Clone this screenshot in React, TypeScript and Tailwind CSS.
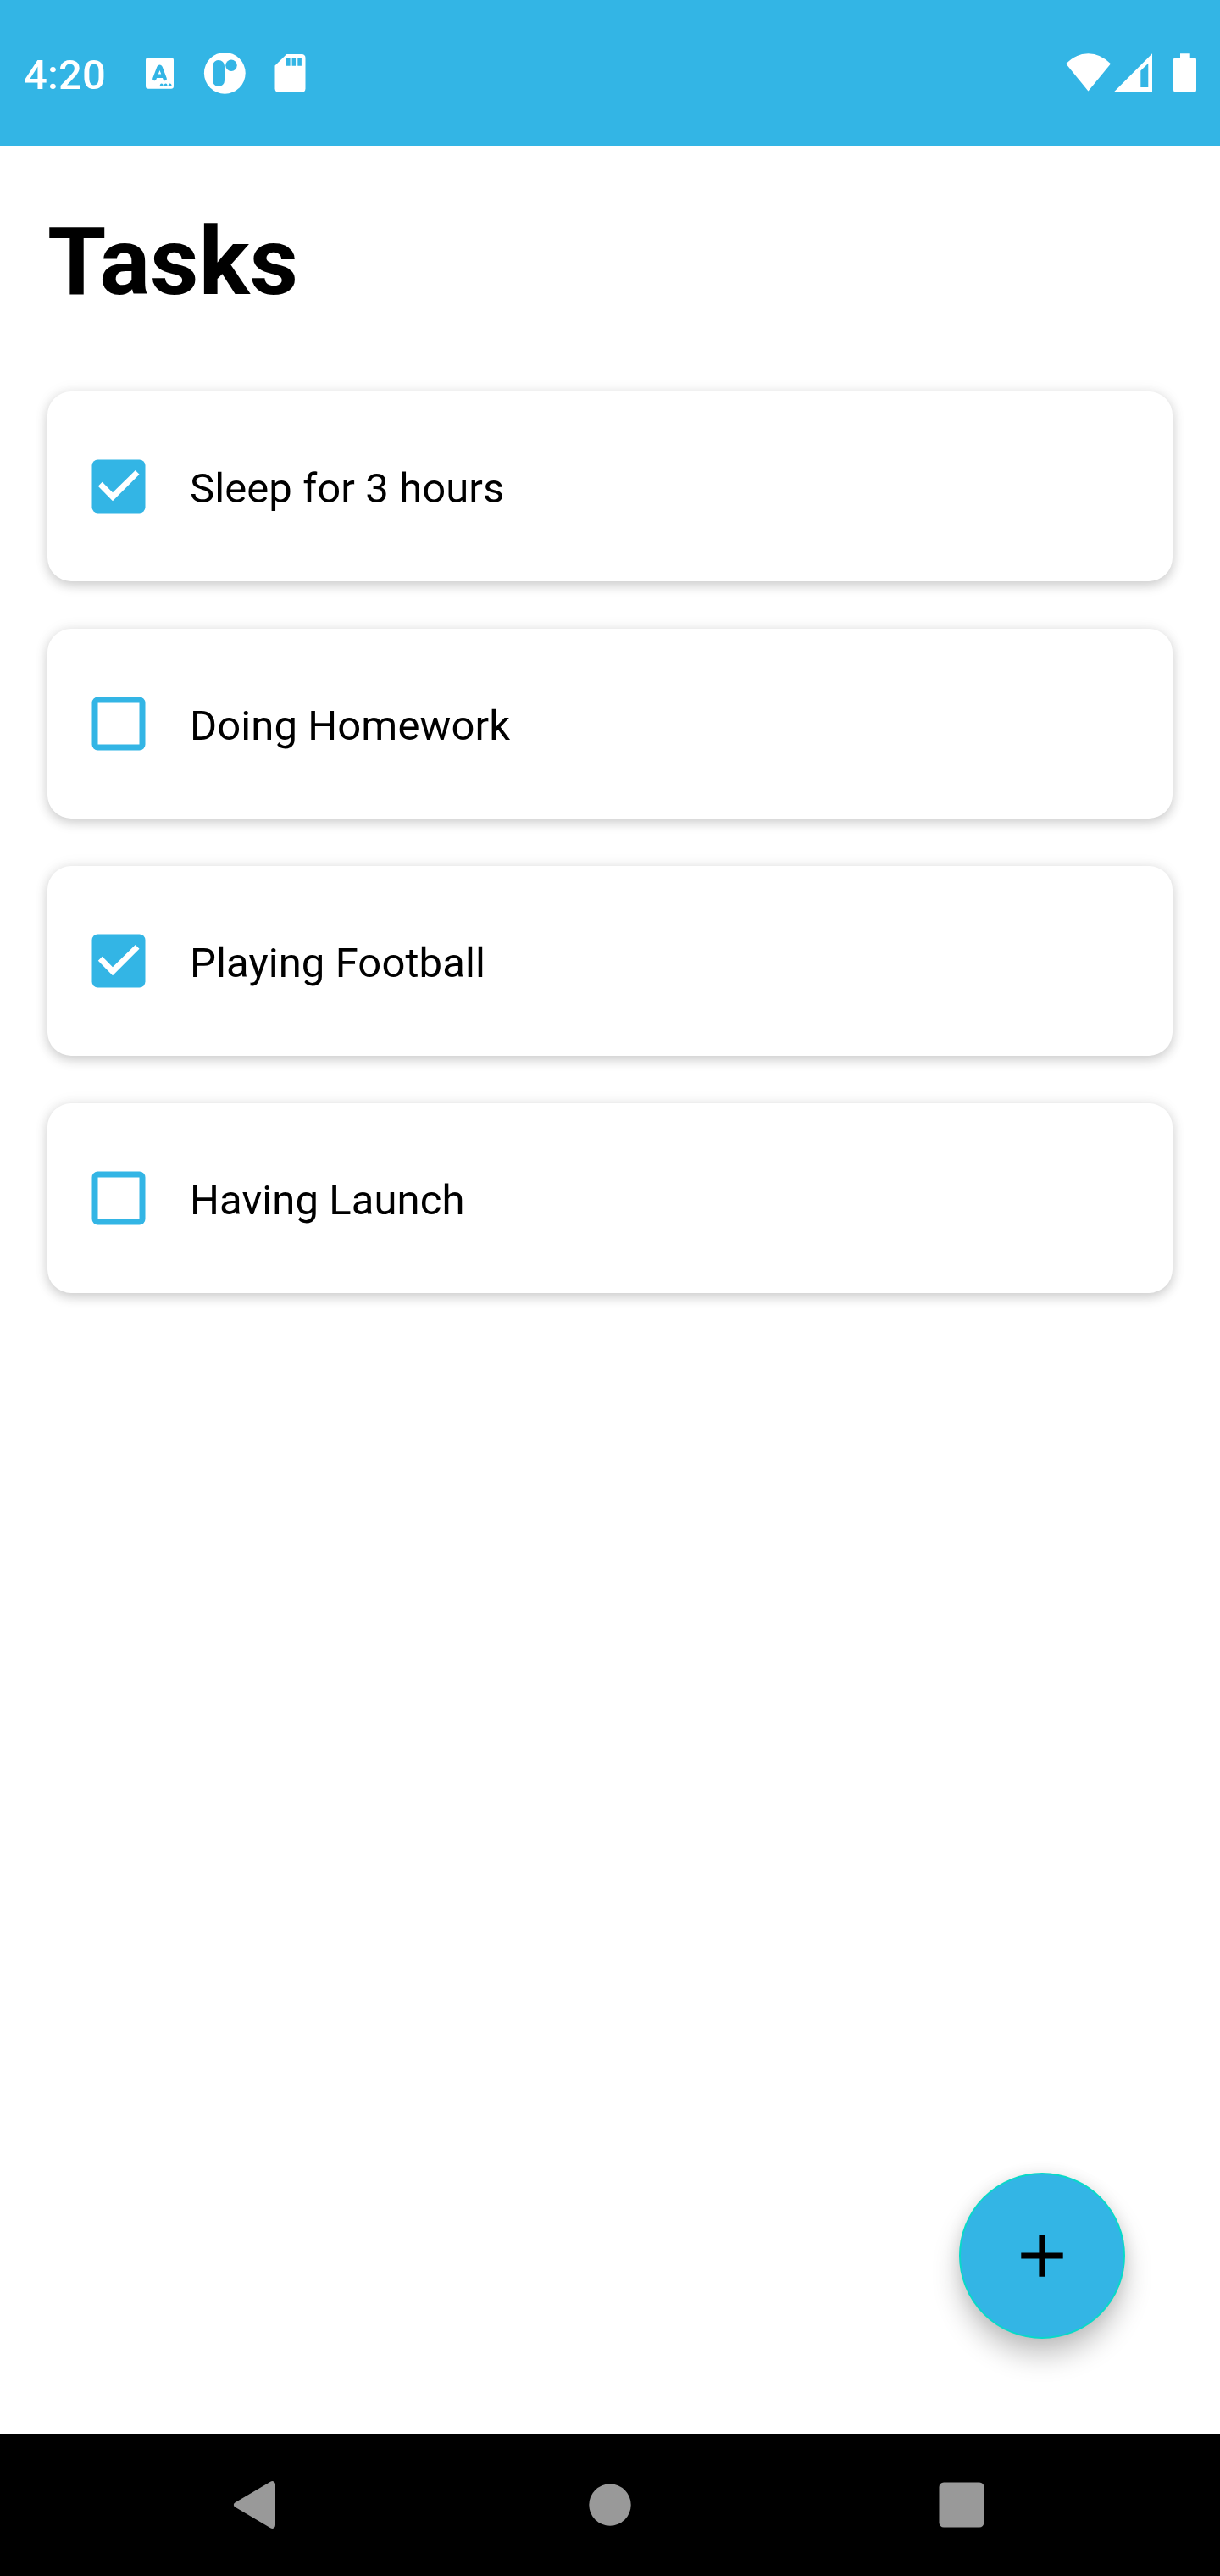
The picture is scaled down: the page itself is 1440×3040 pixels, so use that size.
const tasks = [
  { label: "Sleep for 3 hours", done: true },
  { label: "Doing Homework", done: false },
  { label: "Playing Football", done: true },
  { label: "Having Launch", done: false },
];

function Checkbox({ checked }: { checked: boolean }) {
  return (
    <svg className="size-[84px] shrink-0" viewBox="0 0 84 84" role="checkbox" aria-checked={checked}>
      {checked ? (
        <>
          <rect x="10.5" y="10.5" width="63" height="63" rx="7" fill="#33b5e5" />
          <path d="M17.8 41.8L22.7 36.8L35 49.3L61.8 22.9L66.5 27.7L35 59.2Z" fill="#fff" />
        </>
      ) : (
        <rect x="14" y="14" width="56" height="56" rx="3.5" fill="none" stroke="#33b5e5" strokeWidth="7" />
      )}
    </svg>
  );
}

function StatusBar() {
  return (
    <header className="flex h-[172px] items-start bg-[#33b5e5] pl-7 pr-7 text-white">
      <span className="mt-[60px] w-[98px] text-[49px] leading-[57px] font-medium tracking-[0.1px]">4:20</span>
      <svg className="mt-[62px] ml-[38px] h-12 w-12" viewBox="164 62 48 48">
        <rect x="172" y="68" width="33" height="36.7" rx="3" fill="#fff" />
        <path d="M182.3 93L187.4 79.6Q188.5 77.6 189.6 79.6L194.7 93M185 89.8H192" fill="none" stroke="#33b5e5" strokeWidth="4.4" strokeLinecap="round" strokeLinejoin="round" />
        <g fill="#33b5e5">
          <circle cx="190.7" cy="100.3" r="1.8" />
          <circle cx="195.6" cy="100.3" r="1.8" />
          <circle cx="200.6" cy="100.3" r="1.8" />
        </g>
      </svg>
      <svg className="mt-[60px] ml-[27px] h-[52px] w-[52px]" viewBox="239 60 52 52">
        <circle cx="265.3" cy="86.3" r="24.4" fill="#fff" />
        <rect x="251" y="71" width="14" height="31" rx="7" fill="#33b5e5" />
        <circle cx="273" cy="77.3" r="6.7" fill="#33b5e5" />
      </svg>
      <svg className="mt-[62px] ml-[29px] h-12 w-12" viewBox="320 62 48 48">
        <path d="M338.3 64H356Q360.5 64 360.5 68.5V104.3Q360.5 108.8 356 108.8H329Q324.5 108.8 324.5 104.3V77.5Z" fill="#fff" />
        <path d="M338 68.3h4.6v9.5h-4.6zM344.6 68.3h4.5v9.5h-4.5zM351.3 68.3h4.6v9.5h-4.6z" fill="#33b5e5" />
      </svg>
      <div className="mt-[62px] ml-auto flex">
        <svg className="h-12 w-[56px]" viewBox="1256 62 56 48">
          <path d="M1258.2 75.3Q1270 63.2 1284.5 63.2T1311 75.3L1284.5 107.5Z" fill="#fff" />
        </svg>
        <svg className="h-12 w-[50px]" viewBox="1312 62 50 48">
          <path fillRule="evenodd" d="M1360 63.3V108H1315.3ZM1355.3 74.7L1346.3 83.4V103H1355.3Z" fill="#fff" />
        </svg>
        <svg className="ml-[20px] h-12 w-[30px]" viewBox="1382 62 30 48">
          <path d="M1393 63.2H1404.7V68H1409.2Q1412 68 1412 70.8V106Q1412 108.7 1409.2 108.7H1387.8Q1385 108.7 1385 106V70.8Q1385 68 1387.8 68H1393Z" fill="#fff" />
        </svg>
      </div>
    </header>
  );
}

export default function App() {
  return (
    <div className="flex h-[3040px] w-[1440px] flex-col bg-white font-['Roboto',sans-serif] text-black">
      <StatusBar />
      <main className="flex flex-1 flex-col px-14">
        <h1 className="mt-[71px] text-[112px] leading-[131px] font-bold">Tasks</h1>
        <ul className="mt-[88px] flex flex-col gap-14">
          {tasks.map((task) => (
            <li
              key={task.label}
              className="flex h-56 items-center rounded-[28px] bg-white pl-[42px] shadow-[0_5px_14px_rgba(0,0,0,0.17),0_0_18px_rgba(0,0,0,0.07)]"
            >
              <Checkbox checked={task.done} />
              <span className="ml-[42px] pt-[5px] text-[49px] leading-[57px] tracking-[0.09px]">{task.label}</span>
            </li>
          ))}
        </ul>
        <button
          aria-label="Add task"
          className="mt-auto mr-14 mb-28 flex size-[196px] items-center justify-center self-end rounded-full border-2 border-[#08d9c8] bg-[#33b5e5] shadow-[0_20px_32px_rgba(0,0,0,0.23),0_0_18px_rgba(0,0,0,0.08)]"
        >
          <svg className="size-[84px]" viewBox="0 0 84 84" fill="#000">
            <path d="M38.4 17.3H45.6V38.4H66.7V45.6H45.6V66.7H38.4V45.6H17.3V38.4H38.4Z" />
          </svg>
        </button>
      </main>
      <nav className="flex h-[168px] items-center justify-between bg-black px-[260px] text-[#999]">
        <svg className="size-20" viewBox="260 2916 80 80" fill="currentColor">
          <path d="M277.6 2953.2L319.2 2928.8Q321.2 2927.6 323 2928.4Q325 2929.4 325 2932V2980Q325 2982.6 323 2983.6Q321.2 2984.4 319.2 2983.2L277.6 2958.8Q275.8 2957.6 275.8 2956T277.6 2953.2Z" />
        </svg>
        <svg className="size-[50px]" viewBox="0 0 50 50" fill="currentColor">
          <circle cx="25" cy="25" r="24.7" />
        </svg>
        <svg className="size-20" viewBox="1100 2916 80 80" fill="currentColor">
          <rect x="1108.5" y="2929.5" width="53" height="53" rx="5.5" />
        </svg>
      </nav>
    </div>
  );
}
